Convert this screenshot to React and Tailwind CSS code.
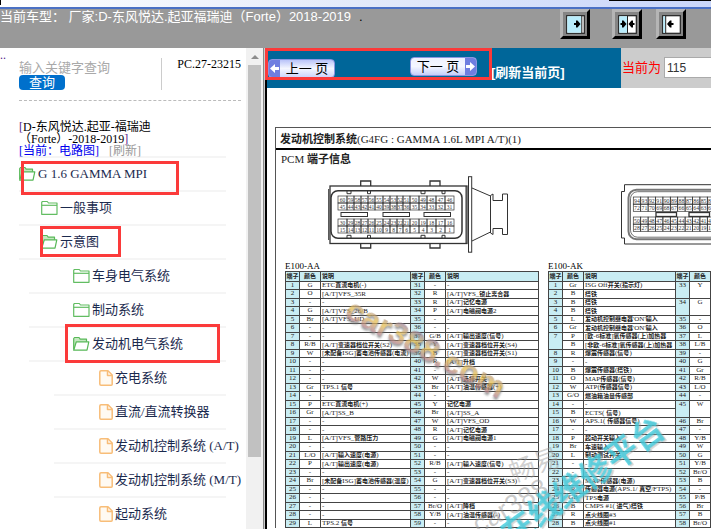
import React, { useState } from 'react';

// --- Sidebar tree ---
const treeItems = [
    { label: 'G 1.6 GAMMA MPI', level: 0, icon: 'open' },
    { label: '一般事项', level: 1, icon: 'folder' },
    { label: '示意图', level: 1, icon: 'open' },
    { label: '车身电气系统', level: 2, icon: 'folder' },
    { label: '制动系统', level: 2, icon: 'folder' },
    { label: '发动机电气系统', level: 2, icon: 'open' },
    { label: '充电系统', level: 3, icon: 'file' },
    { label: '直流/直流转换器', level: 3, icon: 'file' },
    { label: '发动机控制系统 (A/T)', level: 3, icon: 'file' },
    { label: '发动机控制系统 (M/T)', level: 3, icon: 'file' },
    { label: '起动系统', level: 3, icon: 'file' },
];

const rowStyles = ['ml-[19px] pl-0', 'ml-[19px] pl-[22px]', 'ml-[29px] pl-[44px]', 'ml-[54px] pl-[45px]'];

// Red frames drawn over some rows, keyed by label
const marks = {
    'G 1.6 GAMMA MPI': 'left-[2px] top-[3px] w-[158px] h-[34px]',
    '示意图': 'left-[21px] top-0 w-[81px] h-[31px]',
    '发动机电气系统': 'left-[36px] top-[-4px] w-[155px] h-[39px]',
};

// --- Pin tables: [pin, colour, description] ---
const aaLeft = [
    ['1', 'G', 'ETC直流电机(-)'], ['2', 'O', '[A/T]VFS_35R'], ['3', '-', '-'], ['4', 'G', '[A/T]VFS_26/B'],
    ['5', 'Br', '[A/T]VFS_UD'], ['6', '-', '-'], ['7', '-', '-'], ['8', 'R/B', '[A/T]变速器档位开关(S2)'],
    ['9', 'W', '[未配备ISG]蓄电池传感器(电流)'], ['10', '-', '-'], ['11', '-', '-'], ['12', '-', '-'],
    ['13', 'Gr', 'TPS.1 信号'], ['14', '-', '-'], ['15', 'P', 'ETC直流电机(+)'], ['16', 'Gr', '[A/T]SS_B'],
    ['17', '-', '-'], ['18', '-', '-'], ['19', 'L', '[A/T]VFS_管路压力'], ['20', '-', '-'],
    ['21', 'L/O', '[A/T]输入速度(电源)'], ['22', 'P', '[A/T]输出速度(电源)'], ['23', '-', '-'],
    ['24', 'Br', '[未配备ISG]蓄电池传感器(温度)'], ['25', '-', '-'], ['26', '-', '-'], ['27', '-', '-'],
    ['28', '-', '-'], ['29', 'L', 'TPS.2 信号'],
];
const aaRight = [
    ['31', '-', '-'], ['32', 'R', '[A/T]VFS_锁止离合器'], ['33', 'R', '[A/T]记忆电源'], ['34', 'P', '[A/T]电磁阀电源2'],
    ['35', '-', '-'], ['36', '-', '-'], ['37', 'G/B', '[A/T]输出速度(信号)'], ['38', 'Y', '[A/T]变速器档位开关(S4)'],
    ['39', 'B', '[A/T]变速器档位开关(S1)'], ['40', 'R', '[A/T]升档'], ['41', '-', '-'], ['42', 'W', '[A/T]选择开关'],
    ['43', 'Br', '[A/T]油温传感器(+)'], ['44', '-', '-'], ['45', 'Y', '记忆电源'], ['46', 'Br', '[A/T]SS_A'],
    ['47', 'W', '[A/T]VFS_OD'], ['48', 'R', '[A/T]记忆电源'], ['49', 'G', '[A/T]电磁阀电源1'], ['50', '-', '-'],
    ['51', '-', '-'], ['52', 'R/B', '[A/T]输入速度(信号)'], ['53', '-', '-'], ['54', 'G', '[A/T]变速器档位开关(S3)'],
    ['55', '-', '-'], ['56', '-', '-'], ['57', 'Br/O', '[A/T]降档'], ['58', 'Y/B', '[A/T]油温传感器(-)'], ['59', '-', '-'],
];
// An optional 4th value is the row span, an empty pin belongs to the span above
const akLeft = [
    ['1', 'Gr', 'ISG Off开关(指示灯)'], ['2', 'B', '搭铁'], ['3', 'B', '搭铁'], ['4', 'B', '搭铁'],
    ['5', 'L', "发动机控制继电器'ON'输入"], ['6', 'Gr', "发动机控制继电器'ON'输入"],
    ['7', 'P', '[欧-6标准]氧传感器(上)加热器', 2], ['', 'B', '[非欧-6标准]氧传感器(上)加热器'],
    ['8', 'R', '爆震传感器(信号)'], ['9', '-', '-'], ['10', 'B', '爆震传感器(搭铁)'], ['11', 'O', 'MAP传感器(信号)'],
    ['12', 'W', 'ATP(传感器信号)'], ['13', 'G/O', '燃油箱油量传感部'], ['14', '-', '-'], ['15', 'B', 'ECTS( 信号)'],
    ['16', 'W', 'APS.1( 传感器信号)'], ['17', '-', '-'], ['18', 'P', '起动开关输入'], ['19', 'Br', '车速输入'],
    ['20', 'L', '制动测试开关'], ['21', '-', '-'], ['22', '-', '-'], ['23', 'L', 'MAP传感器(电源)'],
    ['24', 'R', '传感器电源(APS.1/ 真空/FTPS)'], ['25', 'GB', 'TPS电源'], ['26', 'B', 'CMPS #1( 进气)搭铁'],
    ['27', 'R', '点火线圈#3'], ['28', 'B', '点火线圈#1'],
];
const akRight = [
    ['33', 'Y', '', 2], [''], ['34', 'G', '', 2], [''], ['35', '-'], ['36', 'O'], ['37', 'L'], ['38', 'L/B'],
    ['39', '-'], ['40', 'G'], ['41', 'Gr'], ['42', 'R/B'], ['43', 'L/O'], ['44', '-'], ['45', 'W', '', 2], [''],
    ['46', 'Br'], ['47', '-'], ['48', 'Y/B'], ['49', 'W'], ['50', 'G'], ['51', 'Y/B'], ['52', 'Br/O'], ['53', 'B'],
    ['54', '-'], ['55', 'P/B'], ['56', 'Br'], ['57', 'B'], ['58', 'Br/O'],
];

const TreeIcon = ({ type }) => {
    if (type === 'file') {
        return (
            <svg width="14" height="16" viewBox="0 0 14 16" fill="#fffaf2" stroke="#f8bd78" strokeWidth="1.5" strokeLinejoin="round" className="shrink-0">
                <path d="M2 .8h7L13.200 5v9.200a1 1 0 0 1-1 1H2a1.200 1.200 0 0 1-1.200-1.200V2A1.200 1.200 0 0 1 2 .8z" />
                <path d="M8.500 1v4.500H13" fill="none" />
            </svg>
        );
    }
    if (type === 'open') {
        return (
            <svg width="17" height="16" viewBox="0 0 17 16" fill="#c4e8c0" stroke="#57b857" strokeWidth="1.2" strokeLinejoin="round" className="shrink-0">
                <path d="M.7 13.500V2.500L1.500 1.500H6l1.200 1.700h6.300V6" />
                <path d="M.7 14.200L3.300 5.800H15.800L14 14.200z" fill="#fff" />
            </svg>
        );
    }
    return (
        <svg width="17" height="16" viewBox="0 0 17 16" fill="#fff" stroke="#62bd62" strokeWidth="1.200" strokeLinejoin="round" className="shrink-0">
            <path d="M.7 14.300V2.200l.8-.7h4.800L7.500 3h8.500v11.300z" />
            <path d="M.7 5.300H16" fill="none" />
        </svg>
    );
};

// Chinese runs are set bold and one size smaller than the Latin text
const Desc = ({ text }) =>
    (text || '').split(/([\u4e00-\u9fff]+)/).map((part, i) =>
        i % 2 ? <b key={i} className="text-[6px]">{part}</b> : part
    );

const cell = 'border border-[#444] p-0 overflow-hidden whitespace-nowrap';

const PinCells = ({ row, withDesc }) => {
    const [pin, color, desc, span] = row;
    const colorSpan = withDesc ? 1 : span;
    return (
        <>
            {pin && <td rowSpan={span} className={`${cell} bg-[#c9edf3] text-center align-top`}>{pin}</td>}
            {color && <td rowSpan={colorSpan} className={`${cell} text-center align-top`}>{color}</td>}
            {withDesc && <td className={`${cell} pl-px`}><Desc text={desc} /></td>}
        </>
    );
};

const PinTable = ({ left, right, rightDesc }) => (
    <table className="table-fixed border-collapse w-full bg-white text-[7px] leading-[7px] text-[#222]">
        <colgroup>
            <col className="w-[14px]" />
            <col className="w-[21px]" />
            <col />
            <col className="w-[14px]" />
            <col className="w-[21px]" />
            {rightDesc && <col className="w-[93px]" />}
        </colgroup>
        <thead>
            <tr className="h-[10px] bg-[#c9edf3] text-[6px]">
                <th className={cell}>端子</th>
                <th className={cell}>颜色</th>
                <th className={`${cell} pl-px text-left`}>说明</th>
                <th className={cell}>端子</th>
                <th className={cell}>颜色</th>
                {rightDesc && <th className={`${cell} pl-px text-left`}>说明</th>}
            </tr>
        </thead>
        <tbody>
            {left.map((row, i) => (
                <tr key={i} className="odd:h-[8px] even:h-[9px]">
                    <PinCells row={row} withDesc />
                    <PinCells row={right[i]} withDesc={rightDesc} />
                </tr>
            ))}
        </tbody>
    </table>
);

// --- Connector drawings ---
const edges = [338, 347, 354, 361, 368, 375, 383, 390, 397, 403, 410, 419, 427, 436, 445, 454];
const pinRows = [
    { y: 196, first: 60 },
    { y: 203, first: 45 },
    { y: 219, first: 30 },
    { y: 226, first: 15 },
];

const ConnectorAA = () => (
    <svg width="182" height="78" viewBox="328 176 182 78" fill="none" stroke="#333" strokeWidth="1" fontFamily="Liberation Serif, serif">
        <rect x="330" y="186" width="137" height="57.500" strokeWidth="1.300" />
        <path d="M328.700 189v51M466 186v57" />
        <rect x="331" y="190.700" width="131" height="47.600" rx="7" strokeWidth="1.500" />
        <path d="M360.700 186v-5h10v5M430 186v-5h10v5M360.700 243v5h10v-5M430 243v5h10v-5" strokeWidth="1.300" />
        <path d="M347 190.700v3h4v-3M367.500 190.700v3h3v-3M421 190.700v3h4v-3M442 190.700v3h3v-3M347 238.300v-3h4v3M367.500 238.300v-3h3v3M421 238.300v-3h4v3M442 238.300v-3h3v3" />
        <rect x="468.500" y="176.700" width="3.200" height="75.500" />
        <path d="M472 188l18.500 8v36L472 241" />
        <path d="M490.500 195.500l2.500-1.500v6.500h9.500v-6.500h5v40.500h-5v-6h-9.500v6l-2.500-1.500z" />
        {[341, 383, 424].map(x => <rect key={x} x={x} y="212.500" width="26.500" height="4" />)}
        {pinRows.map(row => edges.slice(0, 15).map((x, i) => (
            <g key={`${row.y}-${i}`}>
                <rect x={x} y={row.y} width={edges[i + 1] - x} height="7" strokeWidth=".7" />
                <text x={(x + edges[i + 1]) / 2} y={row.y + 5.500} fontSize="5.500" textAnchor="middle" fill="#333" stroke="none">{row.first - i}</text>
            </g>
        )))}
    </svg>
);

const ConnectorAK = () => (
    <svg width="90" height="62" viewBox="621 184 90 62" fill="none" stroke="#333" strokeWidth="1" fontFamily="Liberation Serif, serif">
        <path d="M720 184.700h-95.500v6.800h-3v46.500h3v6H720" />
        <rect x="628.500" y="189.700" width="110" height="49.500" rx="8" stroke="#777" strokeWidth="2" />
        <rect x="630.500" y="191.700" width="106" height="45.500" rx="7" strokeWidth=".7" />
        {[656, 689].map(x => <rect key={x} x={x} y="212.500" width="20.500" height="4" strokeWidth="1.300" />)}
        {[[197, 94], [204, 72], [217, 50], [224, 28]].map(([y, first]) =>
            Array.from({ length: 11 }, (_, i) => (
                <g key={`${y}-${i}`}>
                    <rect x={633.300 + i * 7.400} y={y} width="7.400" height="7.300" strokeWidth=".7" />
                    <text x={637 + i * 7.400} y={y + 5.700} fontSize="5.800" textAnchor="middle" fill="#333" stroke="none">{first - i}</text>
                </g>
            ))
        )}
    </svg>
);

const PaneIcon = ({ type }) => (
    <svg width="19" height="19" viewBox="0 0 19 19">
        <rect x=".7" y=".7" width="17.600" height="17.600" fill="#fff" stroke="#222" strokeWidth="1.200" />
        {type === 'right' && (
            <>
                <path d="M1.300 1.300h14v16.400h-14z" fill="#b9ecfb" />
                <path d="M15.800 1v17" stroke="#222" />
                <path d="M8 8h2V5.500h1.500l3 3.500-3 3.500H10V10H8z" fill="#000" />
            </>
        )}
        {type === 'both' && (
            <>
                <path d="M1.300 1.300h8v16.400h-8z" fill="#b9ecfb" />
                <path d="M9.500 1v17" stroke="#222" />
                <path d="M2.500 8h1.500V5.500h1.500l3 3.500-3 3.500H4V10H2.500zM16.500 8H15V5.500h-1.500l-3 3.500 3 3.500H15V10h1.500z" fill="#000" />
            </>
        )}
        {type === 'left' && (
            <>
                <path d="M1.300 1.300h1.700v16.400H1.300z" fill="#b9ecfb" />
                <path d="M3.700 1v17" stroke="#222" />
                <path d="M11.500 8h-2V5.500H8L5 9l3 3.500h1.500V10h2z" fill="#000" />
            </>
        )}
    </svg>
);

const PaneButton = ({ type, title }) => (
    <button type="button" aria-label={title} className="flex items-center justify-center size-[30px] bg-[#858585] border-[3px] border-t-[#b5b5b5] border-l-[#b5b5b5] border-r-black border-b-black">
        <PaneIcon type={type} />
    </button>
);

const PagerArrow = ({ flip }) => (
    <span className="flex items-center justify-center w-[11px] bg-[#6f7ee0]">
        <svg width="9" height="9" viewBox="0 0 9 9" fill="#fff">
            <path d={flip ? 'M0 3h4V0l5 4.500L4 9V6H0z' : 'M9 3H5V0L0 4.500 5 9V6h4z'} />
        </svg>
    </span>
);

const App = () => {
    const [keyword, setKeyword] = useState('');
    const [page, setPage] = useState('115');

    return (
        <div className="flex flex-col h-screen overflow-hidden bg-white text-black font-['Liberation_Serif','Noto_Sans_CJK_SC',serif]">
            {/* Window edge */}
            <div className="relative h-[9px] shrink-0 border-b-2 border-[#4a70c4] bg-linear-to-r from-white via-[#e3eafa] to-[#c9d6fa]">
                <div className="absolute right-0 top-0 w-[102px] h-px bg-black" />
                <div className="absolute left-0 top-0 w-px h-[5px] bg-black" />
            </div>

            {/* Header */}
            <header className="flex justify-between h-[39px] shrink-0 bg-[#999] pr-[25px] text-[13px] leading-[15px] text-white font-['Liberation_Sans','Noto_Sans_CJK_SC',sans-serif]">
                <p className="whitespace-nowrap">
                    当前车型： 厂家:D-东风悦达.起亚福瑞迪（Forte）2018-2019
                    <span className="pl-2 text-black">.</span>
                </p>
                <div className="flex">
                    <PaneButton type="right" title="展开左栏" />
                    <div className="ml-[22px]"><PaneButton type="both" title="恢复" /></div>
                    <div className="ml-[14px]"><PaneButton type="left" title="收起左栏" /></div>
                </div>
            </header>

            <div className="flex flex-1 min-h-0">
                {/* Sidebar */}
                <aside className="flex w-[263px] shrink-0">
                    <div className="flex-1 min-w-0">
                        <div className="flex h-[53px] mr-[5px]">
                            <span className="w-[19px] pt-px text-[12px] leading-3 text-[#551a8b]">..</span>
                            <div className="flex flex-1 justify-between border-b border-dashed border-[#bbb] pt-[10px]">
                                <form className="flex flex-col items-start w-[143px] h-[32px] border-r border-[#ccc] font-['Liberation_Sans','Noto_Sans_CJK_SC',sans-serif]" onSubmit={e => e.preventDefault()}>
                                    <input
                                        aria-label="关键字"
                                        value={keyword}
                                        onChange={e => setKeyword(e.target.value)}
                                        placeholder="输入关键字查询"
                                        className="w-[130px] h-[17px] pt-0.5 text-[13px] leading-[15px] outline-none placeholder:text-[#a9a9a9]"
                                    />
                                    <button type="submit" className="w-[46px] h-[15px] rounded bg-[#0070cc] text-[13px] leading-[15px] text-white">查询</button>
                                </form>
                                <span className="text-[12px] leading-3">PC.27-23215</span>
                            </div>
                        </div>

                        <div className="ml-[19px] mr-[20px] h-[57px] border-b-2 border-[#f5f5f5] pt-[20px] text-[12px] leading-3 whitespace-nowrap">
                            <p><span className="text-[#551a8b]">[</span>D-东风悦达.起亚-福瑞迪</p>
                            <p>（Forte）-2018-2019<span className="text-[#551a8b]">]</span></p>
                            <a href="#current" className="text-[#0000ee]">[当前：电路图]</a>
                            <a href="#refresh" className="pl-[10px] text-[#999]">[刷新]</a>
                        </div>

                        <ul>
                            {treeItems.map(item => (
                                <li key={item.label} className={`relative flex items-center h-[34px] mr-[20px] border-b-2 border-[#f5f5f5] ${rowStyles[item.level]}`}>
                                    <a href="#item" className="flex items-center gap-0.5 text-[13px] leading-4 text-[#1b2a4e] whitespace-nowrap">
                                        <TreeIcon type={item.icon} />
                                        {item.label}
                                    </a>
                                    {marks[item.label] && <span className={`absolute border-[3px] border-[#fb3a3a] ${marks[item.label]}`} />}
                                </li>
                            ))}
                        </ul>
                    </div>

                    <div className="flex flex-col w-[17px] shrink-0 items-center bg-[#f1f1f1] pt-[7px]">
                        <svg width="8" height="4" viewBox="0 0 8 4" className="mb-[6px] shrink-0"><path d="M0 4l4-4 4 4z" fill="#8c8c8c" /></svg>
                        <div className="w-[13px] h-[392px] bg-[#c1c1c1]" />
                    </div>
                </aside>
                <div className="w-1 shrink-0 border-l border-r-2 border-l-[#888] border-r-black bg-[#ccc]" />

                {/* Main frame */}
                <main className="flex flex-col flex-1 min-w-0">
                    <div className="flex h-[40px] shrink-0">
                        <div className="relative flex flex-1 items-start bg-[#069] font-['Liberation_Sans','Noto_Sans_CJK_SC',sans-serif]">
                            <button type="button" className="flex mt-[11px] ml-px w-[67px] h-[19px] rounded-sm border border-[#8b95e0] bg-linear-to-b from-[#b9c3f8] via-[#f5f7ff] to-[#ccd4fb] text-[13px] leading-[17px] overflow-hidden">
                                <PagerArrow />
                                <span className="flex-1">上一 页</span>
                            </button>
                            <button type="button" className="flex mt-[9px] ml-[75px] w-[67px] h-[19px] rounded-sm border border-[#8b95e0] bg-linear-to-b from-[#eef1ff] via-[#f5f7ff] to-[#c5cefa] text-[13px] leading-[17px] overflow-hidden">
                                <span className="flex-1">下一 页</span>
                                <PagerArrow flip />
                            </button>
                            <a href="#reload" className="mt-[17px] ml-[14px] text-[13px] leading-4 font-bold text-white whitespace-nowrap">[刷新当前页]</a>
                            <span className="absolute left-[-2px] top-0 w-[227px] h-[32px] border-[3px] border-[#fb3a3a]" />
                        </div>
                        <div className="flex w-[90px] shrink-0 items-start bg-[#ccc] pl-px pt-[9px] font-['Liberation_Sans','Noto_Sans_CJK_SC',sans-serif]">
                            <label htmlFor="page" className="w-[42px] shrink-0 text-[13px] leading-[21px] text-[#f00]">当前为</label>
                            <input id="page" value={page} onChange={e => setPage(e.target.value)} className="w-0 flex-1 h-[21px] border border-r-0 border-[#aaa] bg-white pl-0.5 text-[12px] text-[#333]" />
                        </div>
                    </div>

                    {/* Document */}
                    <div className="relative flex-1 min-h-0 overflow-hidden pl-2 pt-[39px]">
                        <article className="border-t border-l border-[#555]">
                            <h1 className="h-[22px] border-b-2 border-black pl-1 pt-1 text-[11px] leading-[15px] text-[#222] whitespace-nowrap"><b>发动机控制系统</b>(G4FG : GAMMA 1.6L MPI A/T)(1)</h1>
                            <h2 className="pl-[5px] pt-0.5 text-[11px] leading-[15px] text-[#222]">PCM <b>端子信息</b></h2>
                            <div className="flex gap-[9px] pl-[9px]">
                                <section className="w-[254px] shrink-0">
                                    <div className="h-[94px] pl-[43px] pt-[9px]"><ConnectorAA /></div>
                                    <h3 className="text-[9px] leading-[10px]">E100-AA</h3>
                                    <PinTable left={aaLeft} right={aaRight} rightDesc />
                                </section>
                                <section className="flex-1 min-w-0">
                                    <div className="flex justify-end h-[94px] pt-[17px]"><ConnectorAK /></div>
                                    <h3 className="text-[9px] leading-[10px]">E100-AK</h3>
                                    <PinTable left={akLeft} right={akRight} />
                                </section>
                            </div>
                        </article>

                        {/* Watermarks */}
                        <span className="absolute left-[70px] top-[242px] w-[178px] rotate-28 bg-linear-to-b from-[#6f4fb0] via-[#e8c04a] to-[#8a4a9a] bg-clip-text text-center text-[32px] leading-9 font-bold text-transparent opacity-75 drop-shadow-[1px_2px_1px_#777] font-['Liberation_Sans',sans-serif]">car388.com</span>
                        <span className="absolute left-[242px] top-[362px] -rotate-20 text-[26px] leading-8 text-[#999]/45 whitespace-nowrap">畅易</span>
                        <span className="absolute left-[202px] top-[402px] -rotate-30 text-[27px] leading-8 text-[#999]/50 font-['Liberation_Sans',sans-serif]">car388</span>
                        <span className="absolute left-[220px] top-[373px] w-[192px] -rotate-36 text-[32px] leading-10 font-bold text-[#3fcbdc]/80 whitespace-nowrap drop-shadow-[1px_2px_0px_#99999988]">在线维修平台</span>
                    </div>
                </main>
            </div>
        </div>
    );
};

export default App;
